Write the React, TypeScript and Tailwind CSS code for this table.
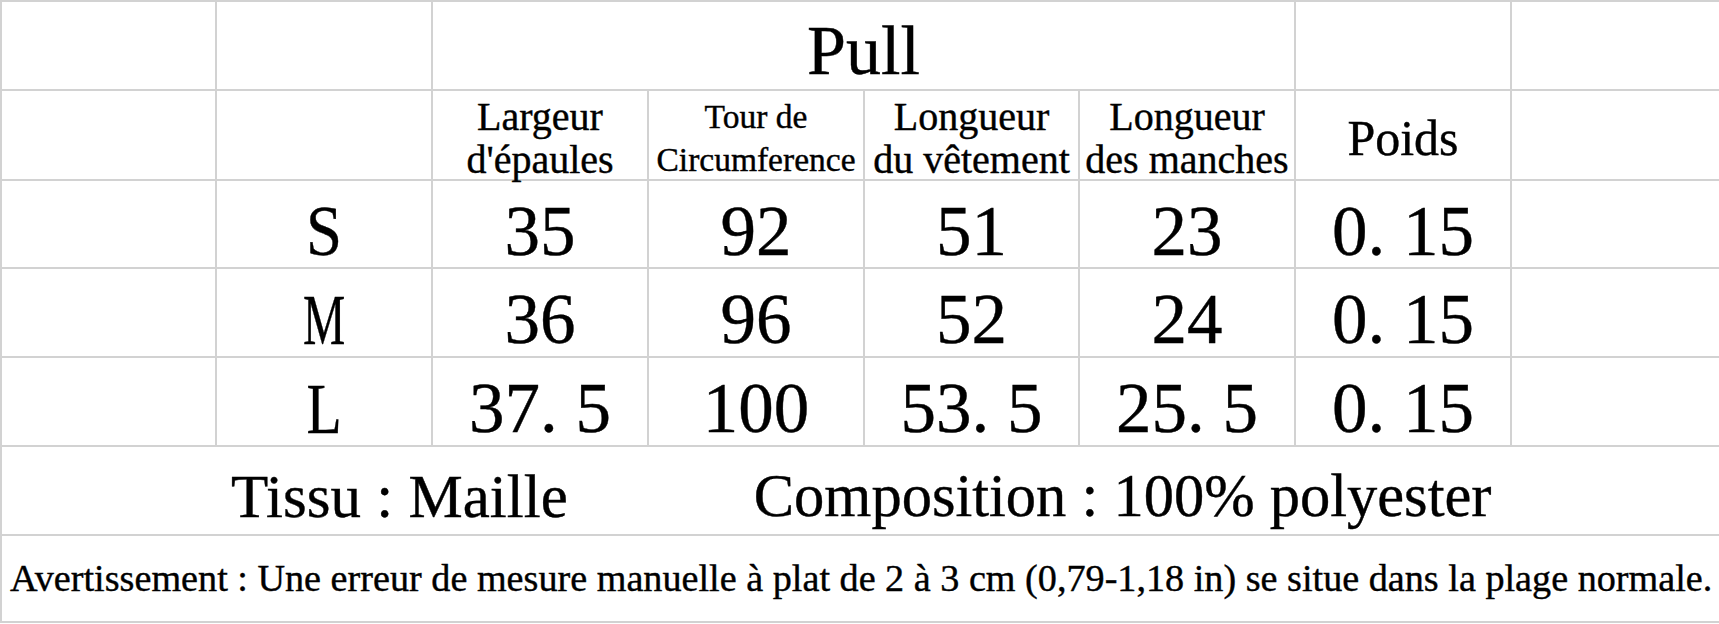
const cell = "border-r-2 border-b-2 border-[#d2d2d2]";
const end = "border-b-2 border-[#d2d2d2]";

const headers = [
  { lines: ["Largeur", "d'épaules"], cls: "text-[40px] leading-[43px]" },
  { lines: ["Tour de", "Circumference"], cls: "text-[33.5px] leading-[43px]" },
  { lines: ["Longueur", "du vêtement"], cls: "text-[40px] leading-[43px]" },
  { lines: ["Longueur", "des manches"], cls: "text-[40px] leading-[43px]" },
  { lines: ["Poids"], cls: "text-[50px] leading-none" },
];

const sizes = [
  { size: "S", cls: "scale-x-[0.9]", vals: ["35", "92", "51", "23", "0. 15"] },
  { size: "M", cls: "scale-x-[0.66]", vals: ["36", "96", "52", "24", "0. 15"] },
  { size: "L", cls: "scale-x-[0.8]", vals: ["37. 5", "100", "53. 5", "25. 5", "0. 15"] },
];

export default function App() {
  return (
    <div className="w-[1719px] h-[624px] bg-white text-black font-['Liberation_Serif',serif] [-webkit-text-stroke:0.4px_black] overflow-hidden">
      <div className="grid grid-cols-[215px_216px_216px_216px_215px_216px_216px_1fr] grid-rows-[89px_90px_88px_89px_89px_89px_87px] border-t-2 border-l-2 border-[#d2d2d2]">
        {/* title row */}
        <div className={cell} />
        <div className={cell} />
        <div className={`${cell} col-span-4 flex items-center justify-center pt-[10px] text-[70px] leading-none`}>
          Pull
        </div>
        <div className={cell} />
        <div className={end} />

        {/* column headers */}
        <div className={cell} />
        <div className={cell} />
        {headers.map((h) => (
          <div
            key={h.lines.join(" ")}
            className={`${cell} flex flex-col items-center justify-center pt-[6px] whitespace-nowrap ${h.cls}`}
          >
            {h.lines.map((l) => (
              <span key={l}>{l}</span>
            ))}
          </div>
        ))}
        <div className={end} />

        {/* measurements */}
        {sizes.map((r) => (
          <div key={r.size} className="contents">
            <div className={cell} />
            <div className={`${cell} flex items-center justify-center pt-[14px] text-[72px] leading-none`}>
              <span className={`inline-block ${r.cls}`}>{r.size}</span>
            </div>
            {r.vals.map((v, i) => (
              <div
                key={i}
                className={`${cell} flex items-center justify-center pt-[14px] text-[71px] leading-none whitespace-nowrap`}
              >
                {v}
              </div>
            ))}
            <div className={end} />
          </div>
        ))}

        {/* fabric */}
        <div className={`${end} col-span-8 flex items-center pl-[229px] gap-[186px] pt-[12px] whitespace-nowrap`}>
          <span className="text-[61px] leading-none">Tissu : Maille</span>
          <span className="text-[60.5px] leading-none">Composition : 100% polyester</span>
        </div>

        {/* warning */}
        <div className={`${end} col-span-8 flex items-center pl-[8px] pt-0 text-[38.2px] leading-none whitespace-nowrap`}>
          Avertissement : Une erreur de mesure manuelle à plat de 2 à 3 cm (0,79-1,18 in) se situe dans la plage normale.
        </div>
      </div>
    </div>
  );
}
